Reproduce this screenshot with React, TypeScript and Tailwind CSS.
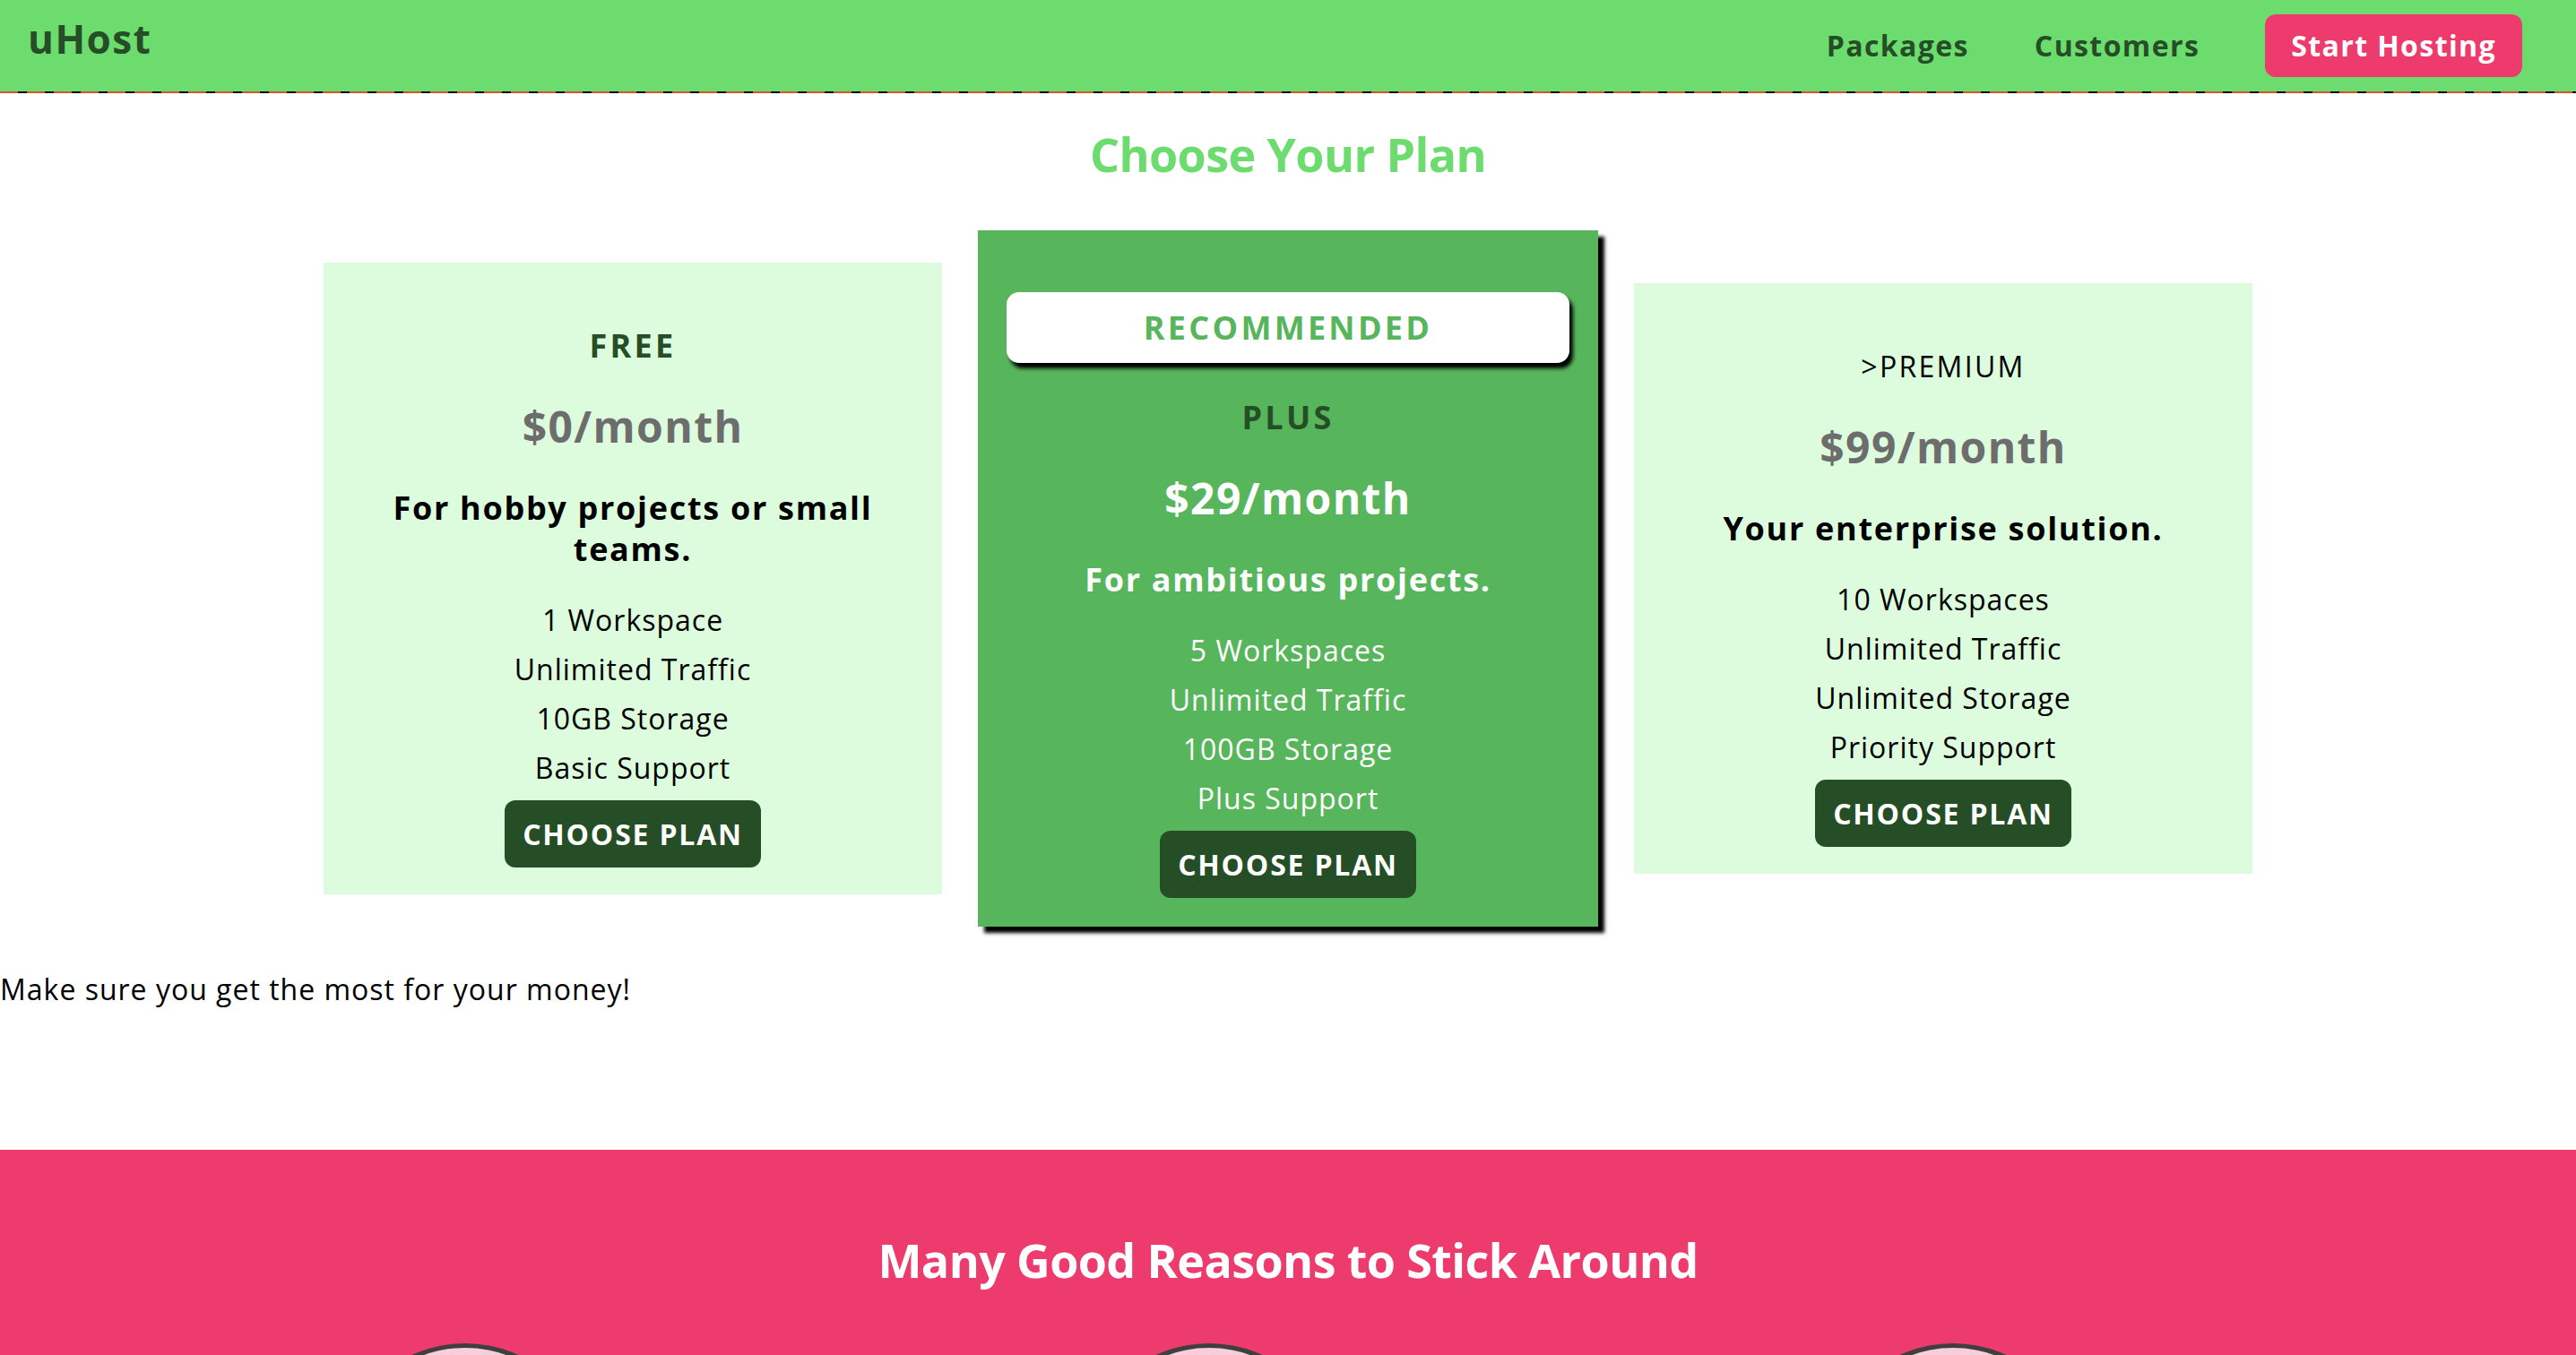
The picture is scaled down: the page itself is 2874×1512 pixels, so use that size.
import React from 'react'

type Plan = {
  name: string
  price: string
  tagline: string
  features: string[]
  highlighted?: boolean
  plainTitle?: boolean
}

const plans: Plan[] = [
  {
    name: 'FREE',
    price: '$0/month',
    tagline: 'For hobby projects or small teams.',
    features: ['1 Workspace', 'Unlimited Traffic', '10GB Storage', 'Basic Support'],
  },
  {
    name: 'PLUS',
    price: '$29/month',
    tagline: 'For ambitious projects.',
    features: ['5 Workspaces', 'Unlimited Traffic', '100GB Storage', 'Plus Support'],
    highlighted: true,
  },
  {
    name: '>PREMIUM',
    price: '$99/month',
    tagline: 'Your enterprise solution.',
    features: ['10 Workspaces', 'Unlimited Traffic', 'Unlimited Storage', 'Priority Support'],
    plainTitle: true,
  },
]

const PlanCard = ({ plan }: { plan: Plan }) => {
  const hl = plan.highlighted
  return (
    <article
      className={
        hl
          ? 'w-[692px] flex flex-col items-center text-center bg-[#57b55b] px-[32px] pt-[69px] pb-[32px] shadow-[7px_7px_4px_#000]'
          : 'w-[690px] flex flex-col items-center text-center bg-[#dcfcdd] px-[32px] pt-[71px] pb-[30px]'
      }
    >
      {hl && (
        <div className="w-full h-[79px] mb-[39px] flex items-center justify-center bg-white rounded-[14px] shadow-[4px_6px_4px_#000] text-[36px] leading-[44px] font-bold tracking-[3.3px] text-[#57b55b]">
          RECOMMENDED
        </div>
      )}
      <h1
        className={
          plan.plainTitle
            ? 'text-[32px] leading-[44px] font-normal tracking-[2.3px] text-black'
            : 'text-[36px] leading-[44px] font-bold tracking-[3.3px] text-[#254d26]'
        }
      >
        {plan.name}
      </h1>
      <h2
        className={
          hl
            ? 'mt-[39px] text-[48px] leading-[58px] font-bold tracking-[1.4px] text-white'
            : 'mt-[39px] text-[48px] leading-[58px] font-bold tracking-[1.4px] text-[#6d6d6d]'
        }
      >
        {plan.price}
      </h2>
      <h3
        className={
          hl
            ? 'mt-[39px] text-[36px] leading-[46px] font-bold tracking-[1.7px] text-white'
            : 'mt-[39px] px-[40px] text-[36px] leading-[46px] font-bold tracking-[1.7px] text-black'
        }
      >
        {plan.tagline}
      </h3>
      <ul
        className={
          hl
            ? 'mt-[28px] text-[32px] leading-[55px] tracking-[1px] text-white'
            : 'mt-[28px] text-[32px] leading-[55px] tracking-[1px] text-black'
        }
      >
        {plan.features.map((f) => (
          <li key={f}>{f}</li>
        ))}
      </ul>
      <button className="mt-[9px] h-[75px] px-[20px] rounded-[12px] bg-[#254d26] text-white text-[32px] font-bold tracking-[1.8px]">
        CHOOSE PLAN
      </button>
    </article>
  )
}

export default function App() {
  return (
    <div className="min-h-screen bg-white font-['Open_Sans',sans-serif] overflow-hidden">
      <header className="h-[102px] bg-[#6ddc6f] flex items-center justify-between pl-[31px] pr-[60px]">
        <a href="#" className="-mt-[16px] text-[44px] font-bold tracking-[1.5px] text-[#254d26]">
          uHost
        </a>
        <nav className="flex items-center gap-[73px]">
          <a href="#" className="text-[32px] font-bold tracking-[1.4px] text-[#254d26]">
            Packages
          </a>
          <a href="#" className="text-[32px] font-bold tracking-[1.4px] text-[#254d26]">
            Customers
          </a>
          <button className="h-[70px] px-[29px] rounded-[12px] bg-[#ec3b6c] text-white text-[32px] font-bold tracking-[1.4px]">
            Start Hosting
          </button>
        </nav>
      </header>
      <div className="h-[2px] bg-[repeating-linear-gradient(90deg,#d4542b_0_20px,#000_20px_30px)]" />

      <main>
        <section>
          <h1 className="mt-[35px] text-center text-[52px] leading-[66px] font-bold tracking-[-0.6px] text-[#6ddc6f]">
            Choose Your Plan
          </h1>
          <div className="mt-[52px] flex items-center justify-center gap-[40px]">
            {plans.map((p) => (
              <PlanCard key={p.name} plan={p} />
            ))}
          </div>
          <p className="mt-[46px] text-[32px] leading-[48px] tracking-[1px] text-black">
            Make sure you get the most for your money!
          </p>
        </section>

        <section className="mt-[155px] bg-[#ec3b6c] pt-[90px] pb-[40px]">
          <h2 className="text-center text-[52px] leading-[66px] font-bold tracking-[-0.6px] text-white">
            Many Good Reasons to Stick Around
          </h2>
          <div className="mt-[60px] pl-[104px] grid grid-cols-[830px_830px_830px]">
            {[0, 1, 2].map((i) => (
              <div key={i} className="flex justify-center">
                <div className="w-[286px] h-[286px] rounded-full border-[5px] border-[#3f3f3f] bg-[#f7cedb]" />
              </div>
            ))}
          </div>
        </section>
      </main>
    </div>
  )
}
